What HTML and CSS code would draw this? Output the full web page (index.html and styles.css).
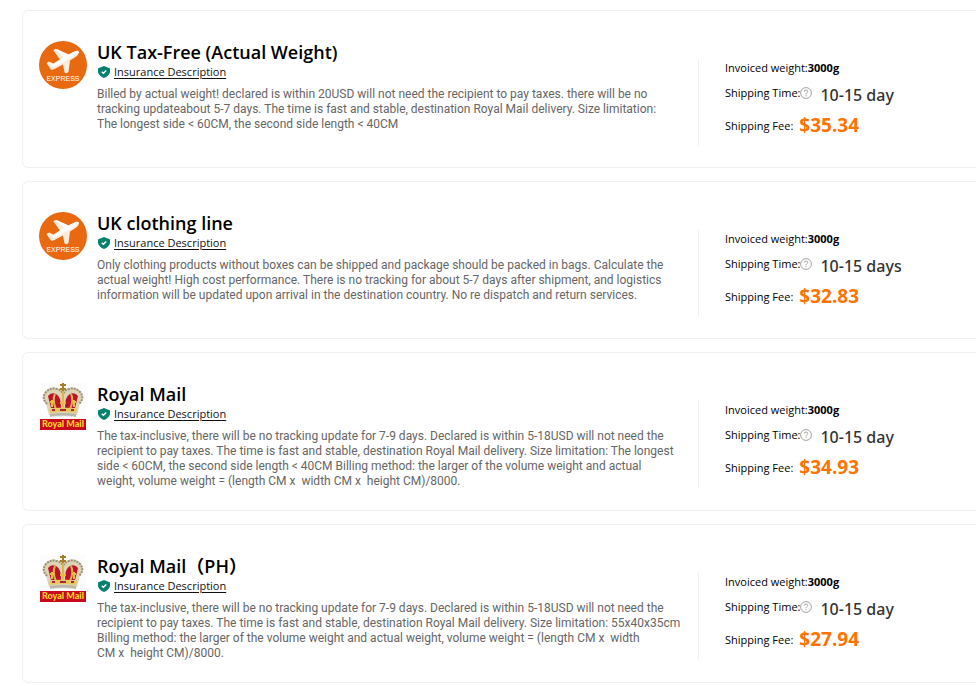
FILE: index.html
```html
<!DOCTYPE html>
<html lang="en">
<head>
    <meta charset="UTF-8">
    <title>Shipping Methods</title>
    <link rel="stylesheet" href="styles.css">
</head>
<body>
    <svg class="sprite" aria-hidden="true">
        <symbol id="express" viewBox="0 0 48 48">
            <circle cx="24" cy="24" r="24" fill="#e8690f"/>
            <path d="M7.500 22 L10 20.500 L14.500 22.500 L21 18.500 L14.500 9.500 Q15 7.500 18 8 L29.500 13.500 L36.500 10 Q40 9 40 11.500 Q39.500 14 36.500 16 L31 19.500 L29.500 31 Q27.500 33 25.500 31.500 L24 23.500 L15.500 28 Q12.500 29.500 11.500 28 Z" fill="#fdebdd"/>
            <path d="M11 25.500 L21 18.500 L29.500 13.500 L36.500 10 Q40 9 40 11.500 L30 18 L15.500 25.500 Z M16 8 L29.500 13.500 L26 17 Z" fill="#fff"/>
            <text x="24" y="40" text-anchor="middle" class="express-text">EXPRESS</text>
        </symbol>
        <symbol id="royal" viewBox="0 0 48 48">
            <rect x="1" y="0" width="46" height="37" fill="#fbfcfb"/>
            <path d="M10 32 L7 20 Q1 15 6 9 Q11 3 18 5 Q23 6 24 10 Q25 6 30 5 Q37 3 42 9 Q47 15 41 20 L38 32 Z" fill="#ddd4b5"/>
            <path d="M8 21 Q2 15 7 9 Q12 4 18 6 Q23 7 24 12 Q25 7 30 6 Q36 4 41 9 Q46 15 40 21" fill="none" stroke="#9b927b" stroke-width="2" stroke-dasharray="2 1"/>
            <path d="M9 13 Q12 9 17 11 Q22 13 22 25 L12 25 Z M39 13 Q36 9 31 11 Q26 13 26 25 L36 25 Z" fill="#bd1229"/>
            <path d="M16 11 Q13 17 17 26 M32 11 Q35 17 31 26 M24 8 V27" fill="none" stroke="#d8b64d" stroke-width="2"/>
            <path d="M24 0 V8 M21 2 H27 M21 6 H27" stroke="#a77d28" stroke-width="2"/>
            <path d="M11 19 H16 M13 17 V24 M21 20 H27 M24 18 V25 M32 19 H37 M35 17 V24" stroke="#e5bd43" stroke-width="2"/>
            <path d="M10 26 Q24 23 38 26 L37 30 Q24 28 11 30 Z" fill="#e6c765"/>
            <path d="M13 27 H16 M21 27 H27 M32 27 H35" stroke="#ac2533" stroke-width="2"/>
            <path d="M11 31 Q24 29 37 31 V34 Q24 32 11 34 Z" fill="#b9b6aa"/>
            <path d="M12 34 Q24 32 36 34" fill="none" stroke="#eee" stroke-dasharray="2 1"/>
            <rect x="1" y="36" width="46" height="11" fill="#c8081b"/>
            <text x="24" y="44" text-anchor="middle" class="royal-text">Royal Mail</text>
        </symbol>
        <symbol id="shield" viewBox="0 0 12 12">
            <path d="M6 0 L11 2 Q12 2 12 3 V6 Q11 10 6 12 Q1 10 0 6 V3 Q0 2 1 2 Z" fill="#07806e"/>
            <path d="M3.800 5.900 L5.400 7.300 L8.200 4.500" fill="none" stroke="#fff" stroke-width="1.400"/>
        </symbol>
        <symbol id="question" viewBox="0 0 12 12">
            <circle cx="6" cy="6" r="5.400" fill="none" stroke="#999" stroke-width="0.900"/>
            <path d="M4.300 4.700 Q4.300 3 6 3 Q7.700 3 7.700 4.500 Q7.700 5.300 6.700 5.900 Q6 6.300 6 7.300 M6 8.200 V9.200" fill="none" stroke="#999" stroke-width="0.900"/>
        </symbol>
    </svg>

    <main class="lines">
        <section class="card">
            <svg class="logo" role="img" aria-label="Express"><use href="#express"/></svg>
            <div class="info">
                <h2>UK Tax-Free (Actual Weight)</h2>
                <div class="insurance"><svg class="shield"><use href="#shield"/></svg><a href="#">Insurance Description</a></div>
                <p>Billed by actual weight! declared is within 20USD will not need the recipient to pay taxes. there will be no<br>tracking updateabout 5-7 days. The time is fast and stable, destination Royal Mail delivery. Size limitation:<br>The longest side &lt; 60CM, the second side length &lt; 40CM</p>
            </div>
            <div class="cost">
                <div class="weight">Invoiced weight:<b>3000g</b></div>
                <div class="time"><span class="label">Shipping Time:<svg class="question"><use href="#question"/></svg></span><span class="days">10-15 day</span></div>
                <div class="fee">Shipping Fee:<span class="price">$35.34</span></div>
            </div>
        </section>

        <section class="card">
            <svg class="logo" role="img" aria-label="Express"><use href="#express"/></svg>
            <div class="info">
                <h2>UK clothing line</h2>
                <div class="insurance"><svg class="shield"><use href="#shield"/></svg><a href="#">Insurance Description</a></div>
                <p>Only clothing products without boxes can be shipped and package should be packed in bags. Calculate the<br>actual weight! High cost performance. There is no tracking for about 5-7 days after shipment, and logistics<br>information will be updated upon arrival in the destination country. No re dispatch and return services.</p>
            </div>
            <div class="cost">
                <div class="weight">Invoiced weight:<b>3000g</b></div>
                <div class="time"><span class="label">Shipping Time:<svg class="question"><use href="#question"/></svg></span><span class="days">10-15 days</span></div>
                <div class="fee">Shipping Fee:<span class="price">$32.83</span></div>
            </div>
        </section>

        <section class="card">
            <svg class="logo" role="img" aria-label="Royal Mail"><use href="#royal"/></svg>
            <div class="info">
                <h2>Royal Mail</h2>
                <div class="insurance"><svg class="shield"><use href="#shield"/></svg><a href="#">Insurance Description</a></div>
                <p>The tax-inclusive, there will be no tracking update for 7-9 days. Declared is within 5-18USD will not need the<br>recipient to pay taxes. The time is fast and stable, destination Royal Mail delivery. Size limitation: The longest<br>side &lt; 60CM, the second side length &lt; 40CM Billing method: the larger of the volume weight and actual<br>weight, volume weight = (length CM x&nbsp; width CM x&nbsp; height CM)/8000.</p>
            </div>
            <div class="cost">
                <div class="weight">Invoiced weight:<b>3000g</b></div>
                <div class="time"><span class="label">Shipping Time:<svg class="question"><use href="#question"/></svg></span><span class="days">10-15 day</span></div>
                <div class="fee">Shipping Fee:<span class="price">$34.93</span></div>
            </div>
        </section>

        <section class="card">
            <svg class="logo" role="img" aria-label="Royal Mail"><use href="#royal"/></svg>
            <div class="info">
                <h2>Royal Mail（PH）</h2>
                <div class="insurance"><svg class="shield"><use href="#shield"/></svg><a href="#">Insurance Description</a></div>
                <p>The tax-inclusive, there will be no tracking update for 7-9 days. Declared is within 5-18USD will not need the<br>recipient to pay taxes. The time is fast and stable, destination Royal Mail delivery. Size limitation: 55x40x35cm<br>Billing method: the larger of the volume weight and actual weight, volume weight = (length CM x&nbsp; width<br>CM x&nbsp; height CM)/8000.</p>
            </div>
            <div class="cost">
                <div class="weight">Invoiced weight:<b>3000g</b></div>
                <div class="time"><span class="label">Shipping Time:<svg class="question"><use href="#question"/></svg></span><span class="days">10-15 day</span></div>
                <div class="fee">Shipping Fee:<span class="price">$27.94</span></div>
            </div>
        </section>
    </main>
</body>
</html>
```
FILE: styles.css
```css
* {
    box-sizing: border-box;
}

body {
    margin: 0;
    background: #fff;
    color: #000;
    font-family: "Open Sans", "Noto Sans CJK SC", sans-serif;
    font-size: 11px;
}

.sprite {
    display: none;
}

.lines {
    display: flex;
    flex-direction: column;
    gap: 13px;
    padding: 10px 0 0 22px;
}

.card {
    display: flex;
    align-items: flex-start;
    min-height: 158px;
    padding: 30px 0 21px 16px;
    border: 1px solid #f0f0f0;
    border-right: 0;
    border-radius: 6px 0 0 6px;
}

.logo {
    flex: none;
    width: 48px;
    height: 48px;
    margin-right: 10px;
}

.express-text {
    font: 7px "Liberation Sans", sans-serif;
    fill: #fff;
}

.royal-text {
    font: 900 9px Lato, sans-serif;
    fill: #ffd52b;
}

.info {
    flex: none;
    width: 601px;
    white-space: nowrap;
}

.info h2 {
    margin: 0;
    font-size: 18px;
    font-weight: 600;
    line-height: 22px;
}

.insurance {
    display: flex;
    align-items: center;
    height: 18px;
}

.shield {
    width: 12px;
    height: 12px;
    margin: 0 4px 0 1px;
}

.insurance a {
    color: #111;
    line-height: 16px;
    text-underline-offset: 2px;
}

.info p {
    margin: 6px 0 0;
    color: #666;
    font-family: Roboto, sans-serif;
    font-size: 12px;
    line-height: 15px;
}

.cost {
    flex: 1;
    height: 87px;
    margin-top: 18px;
    padding-left: 26px;
    border-left: 1px solid #f0f0f0;
    white-space: nowrap;
}

.weight {
    line-height: 18px;
}

.time,
.fee {
    display: flex;
    align-items: center;
    height: 30px;
}

.time {
    align-items: flex-start;
    margin-top: 3px;
    line-height: 30px;
}

.label {
    display: flex;
    align-items: center;
    line-height: 26px;
}

.question {
    width: 12px;
    height: 12px;
}

.days {
    margin-left: 8px;
    color: #333;
    font-family: "Noto Sans", sans-serif;
    font-size: 16px;
    font-weight: 500;
}

.price {
    margin-left: 6px;
    color: #ff7300;
    font-size: 19px;
    font-weight: 700;
}
```
